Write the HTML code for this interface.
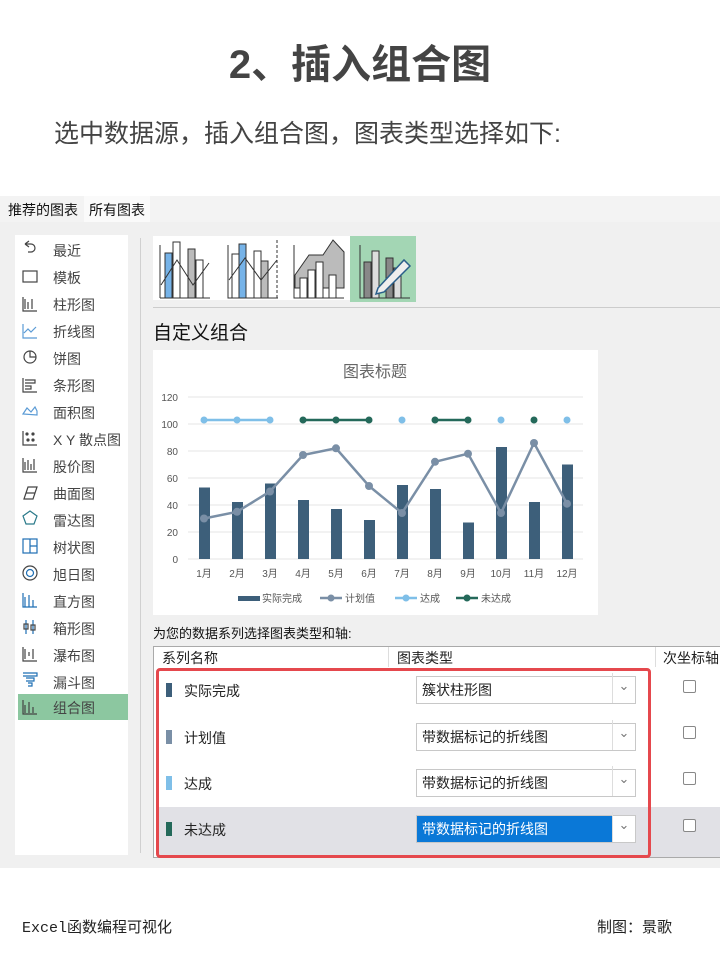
<!DOCTYPE html>
<html><head><meta charset="utf-8"><style>
*{margin:0;padding:0;box-sizing:border-box}
body{width:720px;height:960px;background:#fff;position:relative;overflow:hidden;font-family:"Liberation Sans","Noto Sans CJK SC",sans-serif;color:#333}
.a{position:absolute;white-space:nowrap}
.li{position:absolute;left:53px;font-size:14px;color:#444}
.dd{position:absolute;left:416px;width:220px;height:28px;border:1px solid #c8c8c8;background:#fff;font-size:14px;line-height:26px;padding-left:5px;color:#222}
.dd:after{content:"⌄";position:absolute;right:0;top:-4px;width:22px;border-left:1px solid #ddd;text-align:center;color:#777;font-size:13px;height:30px}
.cb{position:absolute;left:683px;width:13px;height:13px;border:1px solid #888;border-radius:2px;background:#fff}
.sw{position:absolute;left:166px;width:6px;height:14px}
.rn{position:absolute;left:184px;font-size:14px;color:#222}
</style></head><body>
<div class="a" style="left:0;width:720px;top:32px;text-align:center;font-size:40px;font-weight:bold;color:#444">2、插入组合图</div>
<div class="a" style="left:54px;top:114px;font-size:25px;color:#444">选中数据源，插入组合图，图表类型选择如下:</div>

<div class="a" style="left:0;top:196px;width:720px;height:672px;background:#f0f0f0"></div>
<div class="a" style="left:0;top:196px;width:720px;height:26px;background:#f3f3f3"></div>
<div class="a" style="left:8px;top:200px;font-size:14px;color:#111">推荐的图表</div>
<div class="a" style="left:84px;top:196px;width:66px;height:26px;background:#fafafa"></div>
<div class="a" style="left:89px;top:200px;font-size:14px;color:#111">所有图表</div>

<div class="a" style="left:15px;top:235px;width:113px;height:620px;background:#fff"></div>
<div class="a" style="left:18px;top:694px;width:110px;height:26px;background:#8cc7a0"></div>
<div class="a" style="left:140px;top:238px;width:1px;height:615px;background:#d0d0d0"></div>
<svg class="a" style="left:0;top:0" width="140" height="730">
<g fill="none" stroke="#444" stroke-width="1.2">
<path d="M25 244 l4 -3 M25 244 l4 3 M25 244 h6 a4 4 0 0 1 0 8 h-3"/>
<rect x="23" y="271" width="14" height="11"/>
<path d="M23 297v14h14 M25 299v10 M28 302v7 M32 299v10"/>
<path d="M23 324v14h14 M24 333l4-4 3 3 5-5" stroke="#5b9bd5"/>
<circle cx="30" cy="357" r="6"/><path d="M30 351v6h6"/>
<path d="M23 378v14h14 M25 380h10v3h-10 M25 386h6v3h-6"/>
<path d="M23 414l4-6 4 4 4-5 2 4v4z" stroke="#5b9bd5"/>
<path d="M23 431v14h14"/><circle cx="27" cy="434" r="1" fill="#444"/><circle cx="33" cy="434" r="1" fill="#444"/><circle cx="28" cy="440" r="1" fill="#444"/><circle cx="33" cy="440" r="1" fill="#444"/>
<path d="M23 458v14h14 M25 462v8 M28 460v10 M31 464v6 M34 459v11"/>
<path d="M24 499l4-12h9l-4 12z M26 493h9"/>
<path d="M30 511l7 5-3 8h-8l-3-8z" stroke="#2a7a8a"/>
<rect x="23" y="539" width="14" height="14" stroke="#1f6fb4"/><path d="M30 539v14 M30 546h7" stroke="#1f6fb4"/>
<circle cx="30" cy="573" r="7"/><circle cx="30" cy="573" r="3.5" stroke="#1f6fb4"/>
<path d="M23 593v14h14 M25 597v10 M29 595v12 M33 600v7" stroke="#1f6fb4"/>
<path d="M26 620v14 M33 620v14" stroke="#1f6fb4"/><rect x="24" y="624" width="4" height="5"/><rect x="31" y="625" width="4" height="5"/>
<path d="M23 647v14h14 M25 649v10 M29 652v4 M33 649v10"/>
<path d="M23 673h14v3h-14 M26 678h8v3h-8 M28 683h4v3h-4" stroke="#1f6fb4"/>
<path d="M23 700v14h14 M25 705v8 M29 702v11 M33 707v6"/>
</g></svg>
<div class="li" style="top:241px">最近</div>
<div class="li" style="top:268px">模板</div>
<div class="li" style="top:295px">柱形图</div>
<div class="li" style="top:322px">折线图</div>
<div class="li" style="top:349px">饼图</div>
<div class="li" style="top:376px">条形图</div>
<div class="li" style="top:403px">面积图</div>
<div class="li" style="top:430px">X Y 散点图</div>
<div class="li" style="top:457px">股价图</div>
<div class="li" style="top:484px">曲面图</div>
<div class="li" style="top:511px">雷达图</div>
<div class="li" style="top:538px">树状图</div>
<div class="li" style="top:565px">旭日图</div>
<div class="li" style="top:592px">直方图</div>
<div class="li" style="top:619px">箱形图</div>
<div class="li" style="top:646px">瀑布图</div>
<div class="li" style="top:673px">漏斗图</div>
<div class="li" style="top:698px">组合图</div>

<div class="a" style="left:153px;top:236px;width:197px;height:64px;background:#fff"></div>
<div class="a" style="left:350px;top:236px;width:66px;height:66px;background:#a3d6b4"></div>
<svg class="a" style="left:150px;top:230px" width="270" height="72">
<g stroke="#333" stroke-width="1" fill="none">
<path d="M10 15v53 M10 68h50"/>
<rect x="15" y="23" width="7" height="45" fill="#76b3e8"/><rect x="23" y="12" width="7" height="56" fill="#fff"/><rect x="38" y="19" width="7" height="49" fill="#bbb"/><rect x="46" y="30" width="7" height="38" fill="#fff"/>
<path d="M11 55l16-25 16 25 16-22"/>
<path d="M78 15v53h50"/><path d="M127 10v58" stroke-dasharray="3 2"/>
<rect x="82" y="24" width="7" height="44" fill="#fff"/><rect x="89" y="14" width="7" height="54" fill="#76b3e8"/><rect x="104" y="21" width="7" height="47" fill="#fff"/><rect x="111" y="31" width="7" height="37" fill="#bbb"/>
<path d="M79 50l16-22 16 22 16-20"/>
<path d="M144 15v53h50"/><path d="M145 45l14-20 14 0 10-15 11 12v36h-49z" fill="#bbb"/>
<rect x="150" y="48" width="7" height="20" fill="#fff"/><rect x="158" y="40" width="7" height="28" fill="#fff"/><rect x="166" y="32" width="7" height="36" fill="#fff"/><rect x="179" y="45" width="7" height="23" fill="#fff"/>
<path d="M210 15v53h50"/><rect x="214" y="32" width="7" height="36" fill="#888"/><rect x="222" y="21" width="7" height="47" fill="#ddd"/><rect x="236" y="28" width="7" height="40" fill="#888"/><rect x="244" y="38" width="7" height="30" fill="#ddd"/>
<path d="M228 58l26-28 6 6-26 26-8 2z" fill="#eee" stroke="#2a5f8a" stroke-width="1.5"/>
</g></svg>
<div class="a" style="left:153px;top:307px;width:567px;height:1px;background:#ccc"></div>
<div class="a" style="left:153px;top:318px;font-size:19px;color:#111">自定义组合</div>

<div class="a" style="left:153px;top:350px;width:445px;height:265px;background:#fff"></div>
<svg class="a" style="left:0;top:0" width="720" height="620">
<text x="375" y="377" font-size="16" fill="#666" text-anchor="middle" font-family="Liberation Sans,Noto Sans CJK SC,sans-serif">图表标题</text>
<g stroke="#e6e6e6" stroke-width="1"><path d="M188 397h395M188 424h395M188 451h395M188 478h395M188 505h395M188 532h395M188 559h395"/></g>
<g font-size="10" fill="#555" text-anchor="end" font-family="Liberation Sans,sans-serif">
<text x="178" y="401">120</text><text x="178" y="428">100</text><text x="178" y="455">80</text><text x="178" y="482">60</text><text x="178" y="509">40</text><text x="178" y="536">20</text><text x="178" y="563">0</text></g>
<g fill="#3d5f7a">
<rect x="199" y="487.5" width="11" height="71.5"/><rect x="232" y="502" width="11" height="57"/><rect x="265" y="483.5" width="11" height="75.5"/><rect x="298" y="500" width="11" height="59"/><rect x="331" y="509" width="11" height="50"/><rect x="364" y="520" width="11" height="39"/><rect x="397" y="485" width="11" height="74"/><rect x="430" y="489" width="11" height="70"/><rect x="463" y="522.5" width="11" height="36.5"/><rect x="496" y="447" width="11" height="112"/><rect x="529" y="502" width="11" height="57"/><rect x="562" y="464.5" width="11" height="94.5"/></g>
<polyline fill="none" stroke="#7a8fa6" stroke-width="2.5" points="204,518.5 237,511.8 270,491.5 303,455 336,448.3 369,486 402,513 435,461.8 468,453.7 501,513 534,443 567,503.7"/>
<g fill="#7a8fa6"><circle cx="204" cy="518.5" r="4"/><circle cx="237" cy="511.8" r="4"/><circle cx="270" cy="491.5" r="4"/><circle cx="303" cy="455" r="4"/><circle cx="336" cy="448.3" r="4"/><circle cx="369" cy="486" r="4"/><circle cx="402" cy="513" r="4"/><circle cx="435" cy="461.8" r="4"/><circle cx="468" cy="453.7" r="4"/><circle cx="501" cy="513" r="4"/><circle cx="534" cy="443" r="4"/><circle cx="567" cy="503.7" r="4"/></g>
<path d="M204 420h66" stroke="#7fbfe8" stroke-width="2.5"/>
<g fill="#7fbfe8"><circle cx="204" cy="420" r="3.5"/><circle cx="237" cy="420" r="3.5"/><circle cx="270" cy="420" r="3.5"/><circle cx="402" cy="420" r="3.5"/><circle cx="501" cy="420" r="3.5"/><circle cx="567" cy="420" r="3.5"/></g>
<path d="M303 420h66M435 420h33" stroke="#24695a" stroke-width="2.5"/>
<g fill="#24695a"><circle cx="303" cy="420" r="3.5"/><circle cx="336" cy="420" r="3.5"/><circle cx="369" cy="420" r="3.5"/><circle cx="435" cy="420" r="3.5"/><circle cx="468" cy="420" r="3.5"/><circle cx="534" cy="420" r="3.5"/></g>
<g font-size="10" fill="#555" text-anchor="middle" font-family="Liberation Sans,Noto Sans CJK SC,sans-serif">
<text x="204" y="577">1月</text><text x="237" y="577">2月</text><text x="270" y="577">3月</text><text x="303" y="577">4月</text><text x="336" y="577">5月</text><text x="369" y="577">6月</text><text x="402" y="577">7月</text><text x="435" y="577">8月</text><text x="468" y="577">9月</text><text x="501" y="577">10月</text><text x="534" y="577">11月</text><text x="567" y="577">12月</text></g>
<rect x="238" y="596" width="22" height="5" fill="#3d5f7a"/>
<path d="M320 598h22" stroke="#7a8fa6" stroke-width="2.5"/><circle cx="331" cy="598" r="3.5" fill="#7a8fa6"/>
<path d="M395 598h22" stroke="#7fbfe8" stroke-width="2.5"/><circle cx="406" cy="598" r="3.5" fill="#7fbfe8"/>
<path d="M456 598h22" stroke="#24695a" stroke-width="2.5"/><circle cx="467" cy="598" r="3.5" fill="#24695a"/>
<g font-size="10" fill="#555" font-family="Liberation Sans,Noto Sans CJK SC,sans-serif"><text x="262" y="602">实际完成</text><text x="345" y="602">计划值</text><text x="420" y="602">达成</text><text x="481" y="602">未达成</text></g>
</svg>

<div class="a" style="left:153px;top:623px;font-size:13px;color:#111">为您的数据系列选择图表类型和轴:</div>
<div class="a" style="left:153px;top:646px;width:570px;height:212px;background:#fff;border:1px solid #aaa;border-right:none"></div>
<div class="a" style="left:162px;top:648px;font-size:14px;color:#222">系列名称</div>
<div class="a" style="left:388px;top:647px;width:1px;height:20px;background:#ddd"></div>
<div class="a" style="left:397px;top:648px;font-size:14px;color:#222">图表类型</div>
<div class="a" style="left:655px;top:647px;width:1px;height:20px;background:#ddd"></div>
<div class="a" style="left:663px;top:648px;font-size:14px;color:#222">次坐标轴</div>
<div class="a" style="left:157px;top:807px;width:566px;height:50px;background:#e1e1e6"></div>

<div class="sw" style="top:683px;background:#3d5f7a"></div><div class="rn" style="top:681px">实际完成</div>
<div class="dd" style="top:676px">簇状柱形图</div><div class="cb" style="top:680px"></div>
<div class="sw" style="top:730px;background:#7a8fa6"></div><div class="rn" style="top:728px">计划值</div>
<div class="dd" style="top:723px">带数据标记的折线图</div><div class="cb" style="top:726px"></div>
<div class="sw" style="top:776px;background:#7fbfe8"></div><div class="rn" style="top:774px">达成</div>
<div class="dd" style="top:769px">带数据标记的折线图</div><div class="cb" style="top:772px"></div>
<div class="sw" style="top:822px;background:#24695a"></div><div class="rn" style="top:820px">未达成</div>
<div class="dd" style="top:815px;background:linear-gradient(90deg,#0a78d7 0 196px,#fff 196px);color:#fff">带数据标记的折线图</div><div class="cb" style="top:819px"></div>
<div class="a" style="left:156px;top:668px;width:495px;height:190px;border:3px solid #e5484d;border-radius:4px"></div>

<div class="a" style="left:22px;top:916px;font-size:15px;color:#222;font-family:'Liberation Mono','Noto Sans CJK SC',monospace">Excel函数编程可视化</div>
<div class="a" style="left:597px;top:916px;font-size:15px;color:#222;font-family:'Liberation Mono','Noto Sans CJK SC',monospace">制图：景歌</div>
</body></html>
